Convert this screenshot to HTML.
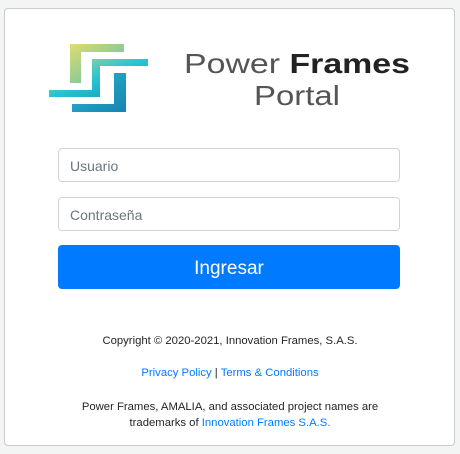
<!DOCTYPE html>
<html><head><style>
body{margin:0;background:#f3f4f4;width:460px;height:454px;overflow:hidden;font-family:"Liberation Sans",sans-serif}
.card{position:absolute;left:4px;top:8px;width:449px;height:436px;background:#fff;border:1px solid #c9cbcc;border-radius:4px}
.inp{position:absolute;left:58px;width:329px;height:32px;border:1px solid #ced4da;border-radius:4px;color:#6c757d;font-size:14px;line-height:35px;padding-left:11px;box-sizing:content-box}
.btn{position:absolute;left:58px;top:245px;width:342px;height:44px;background:#007bff;border-radius:4px;color:#fff;font-size:19px;line-height:48px;text-align:center}
.t{position:absolute;left:0;width:460px;text-align:center;font-size:11.3px;color:#212529}
a{color:#007bff;text-decoration:none}
</style></head><body>
<div class="card"></div>
<svg style="position:absolute;left:0;top:0" width="460" height="130">
<defs>
<linearGradient id="g1" x1="0" y1="0" x2="1" y2="1"><stop offset="0" stop-color="#e1dc6e"/><stop offset="1" stop-color="#4cbfb0"/></linearGradient>
<linearGradient id="g2" x1="0" y1="0" x2="1" y2="1"><stop offset="0" stop-color="#b9d98a"/><stop offset=".5" stop-color="#27c3d4"/><stop offset="1" stop-color="#1b8fb2"/></linearGradient>
<linearGradient id="g3" x1="0" y1="0" x2="1" y2="1"><stop offset="0" stop-color="#2bb7cf"/><stop offset="1" stop-color="#1684b0"/></linearGradient>
</defs>
<path d="M70 44H124V52H81V83H70Z" fill="url(#g1)"/>
<path d="M92 59H148V66H100V97H49V90H92Z" fill="url(#g2)"/>
<path d="M114 73H126V112H72V104H114Z" fill="url(#g3)"/>
<text x="184" y="73" font-size="28" textLength="226" lengthAdjust="spacingAndGlyphs" font-family="Liberation Sans" fill="#555"><tspan>Power </tspan><tspan font-weight="bold" fill="#222">Frames</tspan></text>
<text x="254" y="105" font-size="28" textLength="86" lengthAdjust="spacingAndGlyphs" font-family="Liberation Sans" fill="#555">Portal</text>
</svg>
<div class="inp" style="top:148px">Usuario</div>
<div class="inp" style="top:197px">Contraseña</div>
<div class="btn">Ingresar</div>
<div class="t" style="top:335px">Copyright © 2020-2021, Innovation Frames, S.A.S.</div>
<div class="t" style="top:367px"><a>Privacy Policy</a> | <a>Terms &amp; Conditions</a></div>
<div class="t" style="top:399px;line-height:16px">Power Frames, AMALIA, and associated project names are<br>trademarks of <a>Innovation Frames S.A.S.</a></div>
</body></html>
